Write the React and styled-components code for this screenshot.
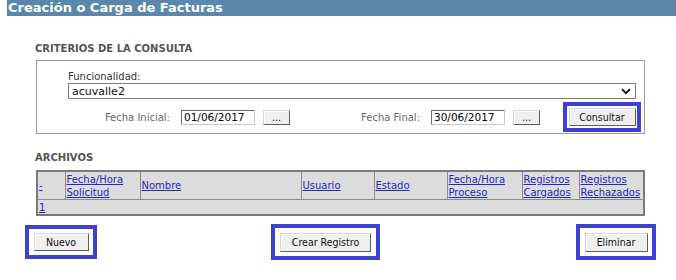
import React from 'react';
import styled, { createGlobalStyle } from 'styled-components';

const GlobalStyle = createGlobalStyle`
  body {
    margin: 0;
    background: #fff;
    font-family: "DejaVu Sans", Verdana, sans-serif;
  }
`;

const TitleBar = styled.div`
  margin-left: 7px;
  height: 16px;
  padding-left: 1px;
  background-color: #5b88aa;
  color: #fff;
  font-size: 13px;
  font-weight: bold;
  line-height: 16px;
  white-space: nowrap;
`;

const Content = styled.div`
  padding-left: 35px;
`;

const SectionTitle = styled.div`
  margin-top: ${(p) => p.$top}px;
  height: 12px;
  font-size: 10px;
  font-weight: bold;
  line-height: 12px;
  color: #555;
`;

// Criterios
const Panel = styled.div`
  box-sizing: border-box;
  width: 609px;
  height: 74px;
  margin: 5px 0 0 1px;
  padding: 10px 0 0 31px;
  border: 1px solid #9a9a9a;
`;

const FieldLabel = styled.div`
  height: 12px;
  font-size: 10px;
  line-height: 12px;
  color: #333;
`;

const Select = styled.div`
  box-sizing: border-box;
  width: 568px;
  height: 16px;
  display: flex;
  align-items: center;
  justify-content: space-between;
  padding: 0 4px 0 3px;
  border: 1px solid #7c7c7c;
  font-size: 11px;
  color: #111;
`;

const Row = styled.div`
  display: flex;
  align-items: center;
  height: 30px;
  margin: 3px 0 0 35px;
`;

const DateLabel = styled.div`
  width: ${(p) => p.$w}px;
  margin-left: ${(p) => p.$ml || 0}px;
  text-align: right;
  font-size: 10px;
  color: #666;
`;

const DateInput = styled.div`
  box-sizing: border-box;
  width: 74px;
  height: 15px;
  margin-left: 11px;
  padding-left: 2px;
  border: 1px solid;
  border-color: #6e6e6e #c9c9c9 #c9c9c9 #6e6e6e;
  font-size: 10.5px;
  line-height: 13px;
  color: #000;
`;

const Button = styled.button`
  box-sizing: border-box;
  width: ${(p) => p.$w}px;
  height: ${(p) => p.$h || 18}px;
  margin-left: ${(p) => p.$ml || 0}px;
  padding: 0;
  background: #efefef;
  border: 1px solid;
  border-color: #d4d4d4 #5e5e5e #5e5e5e #d4d4d4;
  box-shadow: inset 1px 1px 0 #fff;
  font-family: "DejaVu Sans Condensed", "DejaVu Sans", sans-serif;
  font-size: 10.5px;
  line-height: 1;
  color: #111;
`;

const Highlight = styled.div`
  box-sizing: border-box;
  display: flex;
  align-items: center;
  justify-content: center;
  width: ${(p) => p.$w}px;
  height: ${(p) => p.$h}px;
  margin-left: ${(p) => p.$ml || 0}px;
  border: 4px solid #3d40d2;
  background: #fff;
`;

// Archivos
const Table = styled.table`
  width: 607px;
  margin: 6px 0 0 1px;
  border-collapse: collapse;
  table-layout: fixed;
  border: 2px solid #7a7a7a;
  background: #dcdcdc;
  font-size: 10px;
`;

const Cell = styled.td`
  height: ${(p) => p.$h}px;
  padding: 0 0 0 1px;
  border: 1px solid #8c8c8c;
  vertical-align: middle;
  line-height: 13px;
  overflow: hidden;
  white-space: nowrap;
`;

const Link = styled.a`
  color: #2626c2;
  text-decoration: underline;
`;

const Actions = styled.div`
  display: flex;
  align-items: center;
  margin-top: 8px;
  padding-left: 25px;
`;

const Chevron = () => (
  <svg width="10" height="7" viewBox="0 0 10 7">
    <path d="M1 1.2 L5 5.2 L9 1.2" fill="none" stroke="#111" strokeWidth="1.8" />
  </svg>
);

const columns = [
  { w: 28, label: ['-'] },
  { w: 75, label: ['Fecha/Hora', 'Solicitud'] },
  { w: 161, label: ['Nombre'] },
  { w: 73, label: ['Usuario'] },
  { w: 73, label: ['Estado'] },
  { w: 75, label: ['Fecha/Hora', 'Proceso'] },
  { w: 57, label: ['Registros', 'Cargados'] },
  { w: 65, label: ['Registros', 'Rechazados'] },
];

const App = () => {
  return (
    <>
      <GlobalStyle />
      <TitleBar>Creación o Carga de Facturas</TitleBar>
      <Content>
        <SectionTitle $top={27}>CRITERIOS DE LA CONSULTA</SectionTitle>
        <Panel>
          <FieldLabel>Funcionalidad:</FieldLabel>
          <Select>
            <span>acuvalle2</span>
            <Chevron />
          </Select>
          <Row>
            <DateLabel $w={67}>Fecha Inicial:</DateLabel>
            <DateInput>01/06/2017</DateInput>
            <Button $w={27} $h={15} $ml={8}>...</Button>
            <DateLabel $w={70} $ml={60}>Fecha Final:</DateLabel>
            <DateInput>30/06/2017</DateInput>
            <Button $w={27} $h={15} $ml={8}>...</Button>
            <Highlight $w={78} $h={30} $ml={23}>
              <Button $w={67}>Consultar</Button>
            </Highlight>
          </Row>
        </Panel>

        <SectionTitle $top={18}>ARCHIVOS</SectionTitle>
        <Table>
          <colgroup>
            {columns.map((c, i) => (
              <col key={i} style={{ width: c.w }} />
            ))}
          </colgroup>
          <tbody>
            <tr>
              {columns.map((c, i) => (
                <Cell key={i} $h={27}>
                  <Link>
                    {c.label.map((l, j) => (
                      <React.Fragment key={j}>
                        {j > 0 && <br />}
                        {l}
                      </React.Fragment>
                    ))}
                  </Link>
                </Cell>
              ))}
            </tr>
            <tr>
              <Cell $h={14} colSpan={8}>
                <Link>1</Link>
              </Cell>
            </tr>
          </tbody>
        </Table>
      </Content>

      <Actions>
        <Highlight $w={72} $h={34}>
          <Button $w={55}>Nuevo</Button>
        </Highlight>
        <Highlight $w={109} $h={36} $ml={174}>
          <Button $w={91} $h={19}>Crear Registro</Button>
        </Highlight>
        <Highlight $w={80} $h={36} $ml={196}>
          <Button $w={63} $h={19}>Eliminar</Button>
        </Highlight>
      </Actions>
    </>
  );
};

export default App;
